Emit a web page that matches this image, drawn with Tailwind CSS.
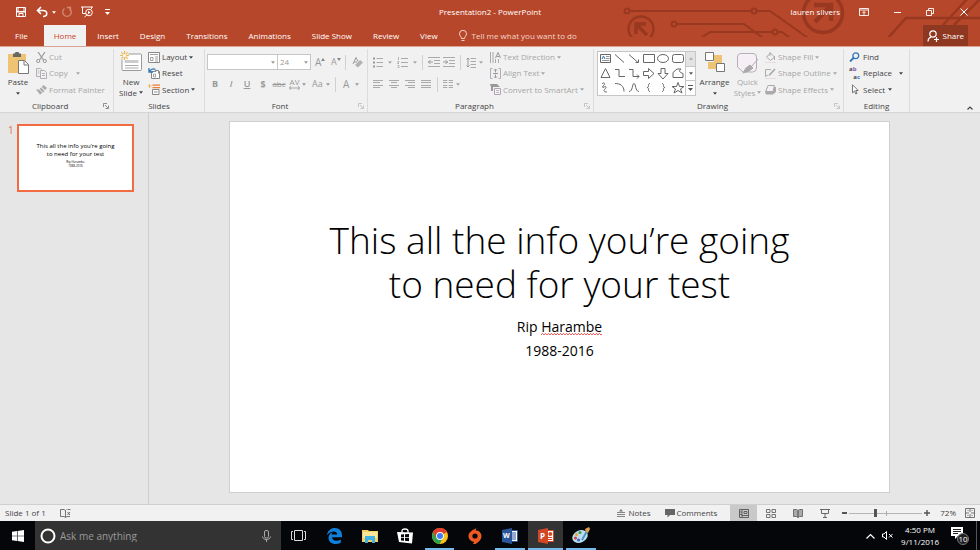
<!DOCTYPE html>
<html lang="en">
<head>
    <meta charset="UTF-8">
    <meta name="viewport" content="width=device-width, initial-scale=1.0">
    <title>Presentation2 - PowerPoint</title>
    <script src="https://cdn.jsdelivr.net/npm/@tailwindcss/browser@4"></script>
</head>
<body class="flex flex-col h-screen overflow-hidden bg-[#e6e6e6] font-['Open_Sans','Noto_Sans',sans-serif] text-[8px] leading-[12px] text-[#444]">

    <!-- Shared icons -->
    <svg class="hidden">
        <symbol id="caret" viewBox="0 0 5 3"><path d="M0 0h5L2.500 3z" fill="currentColor"/></symbol>
        <symbol id="launcher" viewBox="0 0 6 6"><path d="M.5 4V.5H4M2 2l3 3M5.500 2.500v3h-3" fill="none" stroke="currentColor" stroke-width=".8"/></symbol>
    </svg>

    <!-- Title bar and tabs -->
    <header class="relative shrink-0 bg-[#b7472a] text-white border-b border-[#dba394]">
        <svg class="absolute top-0 right-0 w-[360px] h-[37px]" viewBox="620 0 360 37" fill="none" stroke="#993820" stroke-width="2">
            <circle cx="627" cy="11" r="2.500"/><path d="M630 11h121M757 11h13l38 27"/><circle cx="754" cy="11" r="2.500"/>
            <circle cx="674" cy="24" r="2.500"/><path d="M677 24h67l19 14M701 38l9-6h62M778 32h4l8 6"/><circle cx="775" cy="32" r="2.500"/>
            <circle cx="641" cy="29" r="12.500" stroke-width="2.500"/><path d="M636 34v-10h10M637 25l10 10" stroke-width="3.500"/>
            <circle cx="823" cy="13" r="19.500" stroke-width="3.500"/><path d="M814 5h17v16M830 6l-15 16" stroke-width="4.500"/>
            <path d="M888 38l18-20h74" stroke-width="2.500"/><path d="M943 25l25-27M954 25l27-27" stroke-width="2.500"/>
        </svg>

        <div class="relative grid grid-cols-[1fr_auto_1fr] items-center h-[24px]">
            <div class="flex items-center pl-[15px]">
                <button aria-label="Save" class="w-[21px]"><svg class="w-3 h-3" viewBox="0 0 12 12" fill="none" stroke="#fff"><path d="M1.500 1.500h9v9h-9z"/><path d="M3 1.500v4h6v-4M4 10.500v-3h4v3" /><path d="M2 5h8v1.500H2z" fill="#fff" stroke="none"/></svg></button>
                <button aria-label="Undo" class="flex items-center gap-1 w-[25px]"><svg class="w-3 h-3" viewBox="0 0 12 12" fill="none" stroke="#fff" stroke-width="1.600"><path d="M5 1L1.500 4.500 5 8M2 4.500h5c5 0 5 6 0 6"/></svg><svg class="w-1 h-[3px]"><use href="#caret"/></svg></button>
                <button aria-label="Repeat" class="w-[20px]"><svg class="w-3 h-3" viewBox="0 0 12 12" fill="none" stroke="#d18a77" stroke-width="1.300"><path d="M3.500 2.500a4.300 4.300 0 1 0 5 0M6 1.500h3.500V5"/></svg></button>
                <button aria-label="Start From Beginning" class="w-[24px]"><svg class="w-3 h-3" viewBox="0 0 12 12" fill="none" stroke="#fff"><path d="M0 1h12M1.500 1v6.500H5M10.500 1v2M3.500 11l3-2.500"/><circle cx="8" cy="6.500" r="3.300"/><path d="M7 4.800v3.400l2.600-1.700z" fill="#fff" stroke="none"/></svg></button>
                <button aria-label="Customize Quick Access Toolbar"><svg class="w-[5px] h-[6px]" viewBox="0 0 5 6" fill="#fff"><path d="M0 0h5v1H0zM0 3h5L2.500 6z"/></svg></button>
            </div>
            <h1>Presentation2 - PowerPoint</h1>
            <div class="flex items-center justify-end">
                <span class="pr-[15px]">lauren silvers</span>
                <button aria-label="Ribbon Display Options" class="flex justify-center w-[18px]"><svg class="w-[10px] h-[8px]" viewBox="0 0 10 8" fill="none" stroke="#fff"><path d="M.5.5h9v7h-9zM0 2h10M5 7V3.500M3.500 5L5 3.500 6.500 5" stroke-width=".9"/></svg></button>
                <button aria-label="Minimize" class="flex justify-center w-[48px]"><svg class="w-[7px] h-[7px]" viewBox="0 0 7 7"><path d="M0 3.500h7" stroke="#fff"/></svg></button>
                <button aria-label="Restore Down" class="flex justify-center w-[18px]"><svg class="w-2 h-2" viewBox="0 0 8 8" fill="none" stroke="#fff" stroke-width=".9"><path d="M.5 2.500h5v5h-5zM2.500 2V.5h5v5H6"/></svg></button>
                <button aria-label="Close" class="flex justify-center w-[41px] pl-2"><svg class="w-2 h-2" viewBox="0 0 8 8"><path d="M.5.5l7 7M7.500.5l-7 7" stroke="#fff"/></svg></button>
            </div>
        </div>

        <nav class="relative flex gap-px h-[22px] pt-px">
            <button class="px-[15px]">File</button>
            <button class="px-2.5 bg-[#f1f1f1] text-[#c8472a]">Home</button>
            <button class="px-2.5">Insert</button>
            <button class="px-2.5">Design</button>
            <button class="px-2.5">Transitions</button>
            <button class="px-2.5">Animations</button>
            <button class="px-2.5">Slide Show</button>
            <button class="px-2.5">Review</button>
            <button class="px-2.5">View</button>
            <button class="flex items-center gap-[5px] px-2.5 text-[#f3d5cd]"><svg class="w-2 h-3" viewBox="0 0 8 12" fill="none" stroke="currentColor"><path d="M2.500 8.500c0-2-2-2.500-2-4.700a3.500 3.500 0 0 1 7 0c0 2.200-2 2.700-2 4.700zM2.500 10.500h3"/></svg>Tell me what you want to do</button>
            <button class="flex items-center gap-1 px-1 ml-auto mr-3 bg-[#8f3821]"><svg class="w-3 h-3" viewBox="0 0 12 12" fill="none" stroke="#fff" stroke-width="1.200"><circle cx="6" cy="4" r="3.200"/><path d="M4 7c-2 .8-3 2-3 4.500M9.500 7v5M7 9.500h5"/></svg>Share</button>
        </nav>
    </header>

    <!-- Ribbon -->
    <div class="flex shrink-0 h-[66px] bg-[#f1f1f1] border-b border-[#d5d5d5] pt-[2px]">

        <!-- Clipboard -->
        <section class="flex flex-col w-[114px] border-r border-[#dcdcdc]">
            <div class="flex flex-1">
                <button class="flex flex-col items-center w-[36px] pt-[3px]">
                    <svg class="w-[21px] h-[22px]" viewBox="0 0 21 22"><path d="M0 2h18v19H0z" fill="#eec473"/><path d="M5 1.500h2a2 2 0 0 1 4 0h2V5H5z" fill="#666"/><path d="M10.500 8.500h6l4 4v9h-10z" fill="#fff" stroke="#777"/><path d="M16 9v4h4" fill="none" stroke="#777"/></svg>
                    <span class="pt-0.5">Paste</span>
                    <svg class="w-1 h-[3px] mt-1"><use href="#caret"/></svg>
                </button>
                <div class="flex flex-col text-[#a6a6a6]">
                    <button class="flex items-center gap-[2px] h-[16px]"><svg class="w-[11px] h-[11px]" viewBox="0 0 11 11" fill="none" stroke="#999"><path d="M2 0l5.500 8M9 0L3.500 8" stroke-width="1.200"/><circle cx="2.200" cy="9" r="1.600"/><circle cx="8.800" cy="9" r="1.600"/></svg>Cut</button>
                    <button class="flex items-center gap-[2px] h-[16px]"><svg class="w-[11px] h-[11px]" viewBox="0 0 11 11" fill="#f4eef4" stroke="#aaa" stroke-width=".9"><path d="M.5.500h4l2 2v6h-6z"/><path d="M4.500 2.500h4l2 2v6h-6z"/><path d="M6 5.500h3M6 7.500h3M1.800 3h1.500M1.800 5h1.500"/></svg>Copy<svg class="w-1 h-[3px] ml-1.5"><use href="#caret"/></svg></button>
                    <button class="flex items-center gap-[2px] h-[17px]"><svg class="w-[11px] h-[10px]" viewBox="0 0 11 10" fill="#aaa"><path d="M7.500 0L11 3 9 5 5.800 2zM5 2.500L8.500 6 7 7.500 3.500 4zM3 4.500L6.500 8 4 9.500 0 4.500z"/></svg>Format Painter</button>
                </div>
            </div>
            <div class="flex items-center h-[12px] pl-8 pr-1"><span>Clipboard</span><button aria-label="Clipboard options" class="ml-auto text-[#777]"><svg class="block w-[6px] h-[6px]"><use href="#launcher"/></svg></button></div>
        </section>

        <!-- Slides -->
        <section class="flex flex-col w-[91px] border-r border-[#dcdcdc]">
            <div class="flex flex-1">
                <button class="flex flex-col items-center w-[34px] pt-[2px]">
                    <svg class="w-[22px] h-[21px] shrink-0" viewBox="0 0 22 21"><rect x="2" y="3" width="19.500" height="16.500" rx="1" fill="#fff" stroke="#999"/><path d="M4.500 9h14v3h-14z" fill="#ccc"/><path d="M5 14.500h13.500M5 17h13.500" stroke="#aaa"/><path d="M0 0h8.500v8.500H0z" fill="#f1f1f1"/><path d="M4.500 0v9M0 4.500h9M1.300 1.300l6.400 6.400M7.700 1.300L1.300 7.700" stroke="#f0b955" stroke-width="1.200"/><circle cx="4.500" cy="4.500" r="1.500" fill="#fff"/></svg>
                    <span class="pt-1 leading-[11px]">New<br><span class="flex items-center gap-[2px]">Slide <svg class="w-1 h-[3px]"><use href="#caret"/></svg></span></span>
                </button>
                <div class="flex flex-col">
                    <button class="flex items-center gap-[2px] h-[16px]"><svg class="w-[12px] h-[11px]" viewBox="0 0 12 11" fill="#fff" stroke="#888"><path d="M.5.500h11v10H.5z"/><path d="M2 2.500h8M2.500 5.500h2.500v3H2.500zM7 5h3M7 7h3M7 9h3" stroke-width=".8"/></svg>Layout<svg class="w-1 h-[3px]"><use href="#caret"/></svg></button>
                    <button class="flex items-center gap-[2px] h-[16px]"><svg class="w-[12px] h-[11px]" viewBox="0 0 12 11" fill="#fff" stroke="#888"><path d="M3.500 3.500h8v7h-8z"/><path d="M7 2.500h3.500v3" stroke="#888"/><path d="M5.500 6h2v3h-2z" stroke-width=".7"/><path d="M1 0v4h4M1.500 3.500c2-3 4-3 6-2" fill="none" stroke="#2f74b5" stroke-width="1.300"/></svg>Reset</button>
                    <button class="flex items-center gap-[2px] h-[17px]"><svg class="w-[12px] h-[11px]" viewBox="0 0 12 11" fill="none"><path d="M4.500 1.200H12M4.500 3.700H12" stroke="#ed7d31" stroke-width="1.300"/><path d="M1.500 0v4M0 2h3.500" stroke="#f0b955"/><path d="M4.500 5.500h6.500v5H4.500z" fill="#fff" stroke="#888"/><path d="M6 8h3.500" stroke="#888"/></svg>Section<svg class="w-1 h-[3px]"><use href="#caret"/></svg></button>
                </div>
            </div>
            <div class="h-[12px] text-center">Slides</div>
        </section>

        <!-- Font -->
        <section class="flex flex-col w-[163px] border-r border-[#dcdcdc] text-[#999]">
            <div class="flex flex-col flex-1 gap-[6px] pt-[5px] pl-[2px]">
                <div class="flex items-center h-[16px]">
                    <label class="relative block w-[71px] h-[16px]">
                        <select aria-label="Font" class="block w-full h-full px-1 bg-white border border-[#c6c6c6] appearance-none"><option></option></select>
                        <svg class="absolute right-[3px] top-[7px] w-1 h-[3px]"><use href="#caret"/></svg>
                    </label>
                    <label class="relative block w-[34px] h-[16px] -ml-px">
                        <select aria-label="Font Size" class="block w-full h-full px-0.5 bg-white border border-[#c6c6c6] appearance-none"><option>24</option></select>
                        <svg class="absolute right-[3px] top-[7px] w-1 h-[3px]"><use href="#caret"/></svg>
                    </label>
                    <button aria-label="Increase Font Size" class="flex w-[16px] ml-1 text-[10px]">A<svg class="w-[4px] h-[3px] mt-0.5" viewBox="0 0 4 3"><path d="M0 3l2-3 2 3z" fill="#888"/></svg></button>
                    <button aria-label="Decrease Font Size" class="flex w-[14px] text-[9px]">A<svg class="w-[4px] h-[3px] mt-0.5" viewBox="0 0 4 3"><path d="M0 0h4L2 3z" fill="#888"/></svg></button>
                    <span class="w-px h-[15px] bg-[#d0d0d0]"></span>
                    <button aria-label="Clear All Formatting" class="ml-1.5"><svg class="w-[11px] h-[11px]" viewBox="0 0 11 11"><path d="M1 7L4 .5l2 4M2 5h3" fill="none" stroke="#999"/><path d="M8 3l3 2.500-5 5L3 8z" fill="#b5b0b5"/></svg></button>
                </div>
                <div class="flex items-center h-[16px] text-[9px]">
                    <button class="w-[16px] font-bold">B</button>
                    <button class="w-[16px] italic font-semibold">I</button>
                    <button class="w-[16px] font-semibold underline">U</button>
                    <button class="w-[16px] font-bold text-shadow-xs">S</button>
                    <button class="w-[16px] text-[8px] line-through">abc</button>
                    <button aria-label="Character Spacing" class="flex items-center gap-[2px] w-[21px] pl-0.5"><span class="flex flex-col text-[8px] leading-[8px]">AV<svg class="w-[11px] h-[4px]" viewBox="0 0 11 4" fill="none" stroke="#999" stroke-width=".8"><path d="M0 2h11M2 0L.5 2 2 4M9 0l1.500 2L9 4"/></svg></span><svg class="w-1 h-[3px]"><use href="#caret"/></svg></button>
                    <button class="flex items-center gap-[3px] pl-1 w-[25px]">Aa<svg class="w-1 h-[3px]"><use href="#caret"/></svg></button>
                    <span class="w-px h-[15px] ml-0.5 bg-[#d0d0d0]"></span>
                    <button aria-label="Font Color" class="flex items-center gap-1.5 pl-[7px] text-[10px]">A<svg class="w-1 h-[3px]"><use href="#caret"/></svg></button>
                </div>
            </div>
            <div class="relative h-[12px] text-center text-[#444] pr-3">Font<button aria-label="Font options" class="absolute right-[3px] top-[3px] text-[#bbb]"><svg class="block w-[6px] h-[6px]"><use href="#launcher"/></svg></button></div>
        </section>

        <!-- Paragraph -->
        <section class="flex flex-col w-[226px] border-r border-[#dcdcdc] text-[#a6a6a6]">
            <div class="flex flex-1">
                <div class="flex flex-col gap-[6px] pt-[5px] pl-[5px] w-[122px]">
                    <div class="flex items-center h-[16px]">
                        <button aria-label="Bullets" class="flex items-center gap-[5px] w-[24px]"><svg class="w-[10px] h-[11px]" viewBox="0 0 10 11" stroke="#aaa"><path d="M3.500 1.500H10M3.500 5.500H10M3.500 9.500H10"/><path d="M0 1.500h2M0 5.500h2M0 9.500h2" stroke-width="2" stroke="#999"/></svg><svg class="w-1 h-[3px]"><use href="#caret"/></svg></button>
                        <button aria-label="Numbering" class="flex items-center gap-[5px] w-[25px]"><svg class="w-[11px] h-[11px]" viewBox="0 0 11 11" fill="none" stroke="#aaa"><path d="M4 1.500h7M4 5.500h7M4 9.500h7"/><path d="M1.500 0v3M.5 4.500h1.500L.5 6.500H2M.5 8.500H2v2H.5" stroke="#999" stroke-width=".7"/></svg><svg class="w-1 h-[3px]"><use href="#caret"/></svg></button>
                        <span class="w-px h-[15px] bg-[#d0d0d0]"></span>
                        <button aria-label="Decrease List Level" class="pl-[5px] w-[19px]"><svg class="w-[12px] h-[10px]" viewBox="0 0 12 10" fill="none" stroke="#999"><path d="M0 .5h12M6 3.500h6M6 6.500h6M0 9.500h12" stroke="#aaa"/><path d="M0 5h5M2.500 3L.5 5l2 2"/></svg></button>
                        <button aria-label="Increase List Level" class="w-[18px] pl-px"><svg class="w-[12px] h-[10px]" viewBox="0 0 12 10" fill="none" stroke="#999"><path d="M0 .5h12M6 3.500h6M6 6.500h6M0 9.500h12" stroke="#aaa"/><path d="M0 5h5M2.500 3l2 2-2 2"/></svg></button>
                        <span class="w-px h-[15px] bg-[#d0d0d0]"></span>
                        <button aria-label="Line Spacing" class="flex items-center gap-[3px] pl-[5px]"><svg class="w-[10px] h-[11px]" viewBox="0 0 10 11" fill="none" stroke="#aaa"><path d="M4.500 1.500H10M4.500 4.500H10M4.500 7.500H10M4.500 10.500H10"/><path d="M2 1v9M.5 2.500L2 1l1.500 1.500M.5 8.500L2 10l1.500-1.500" stroke="#999"/></svg><svg class="w-1 h-[3px]"><use href="#caret"/></svg></button>
                    </div>
                    <div class="flex items-center h-[16px]">
                        <button aria-label="Align Left" class="w-[16px]"><svg class="w-[11px] h-[8px]" viewBox="0 0 11 8" stroke="#aaa"><path d="M0 .5h10M0 2.500h7M0 5.500h10M0 7.500h7"/></svg></button>
                        <button aria-label="Center" class="w-[16px]"><svg class="w-[11px] h-[8px]" viewBox="0 0 11 8" stroke="#aaa"><path d="M0 .5h10M2 2.500h6M0 5.500h10M2 7.500h6"/></svg></button>
                        <button aria-label="Align Right" class="w-[16px]"><svg class="w-[11px] h-[8px]" viewBox="0 0 11 8" stroke="#aaa"><path d="M0 .5h10M3 2.500h7M0 5.500h10M3 7.500h7"/></svg></button>
                        <button aria-label="Justify" class="w-[16px]"><svg class="w-[11px] h-[8px]" viewBox="0 0 11 8" stroke="#aaa"><path d="M0 .5h10M0 2.500h10M0 5.500h10M0 7.500h10"/></svg></button>
                        <span class="w-px h-[15px] bg-[#d0d0d0]"></span>
                        <button aria-label="Columns" class="flex items-center gap-[3px] pl-[5px]"><svg class="w-[10px] h-[8px]" viewBox="0 0 10 8" stroke="#aaa"><path d="M0 .5h4.300M0 2.500h4.300M0 5.500h4.300M0 7.500h4.300M5.700.5H10M5.700 2.500H10M5.700 5.500H10M5.700 7.500H10"/></svg><svg class="w-1 h-[3px]"><use href="#caret"/></svg></button>
                    </div>
                </div>
                <div class="flex flex-col">
                    <button class="flex items-center gap-[2px] h-[16px]"><svg class="w-[11px] h-[11px]" viewBox="0 0 11 11" fill="none" stroke="#999"><path d="M.5 0v11M3 0v11M5.500 7v4M8.500 7v4" stroke-width=".8"/><path d="M5.500 6L8 .5l2.500 5.500M6.500 4.500h3"/></svg>Text Direction<svg class="w-1 h-[3px]"><use href="#caret"/></svg></button>
                    <button class="flex items-center gap-[2px] h-[16px]"><svg class="w-[11px] h-[11px]" viewBox="0 0 11 11" fill="none" stroke="#999"><path d="M2.500.5h-2v10h2M8.500.5h2v10h-2" stroke="#b8a8bc"/><path d="M5.500 1v3.500M5.500 6.500V10M4 2.500L5.500 1 7 2.500M4 8.500L5.500 10 7 8.500M3 5.500h5"/></svg>Align Text<svg class="w-1 h-[3px]"><use href="#caret"/></svg></button>
                    <button class="flex items-center gap-[2px] h-[17px]"><svg class="w-[11px] h-[11px]" viewBox="0 0 11 11"><path d="M0 0h7l3 3H3v4H1V3z" fill="#999"/><path d="M4.500 4.500h6v6h-6z" fill="#f8f2f8" stroke="#b0a4b4"/><path d="M6 6.500h3M6 8.500h3" stroke="#aaa" stroke-width=".8"/></svg>Convert to SmartArt<svg class="w-1 h-[3px]"><use href="#caret"/></svg></button>
                </div>
            </div>
            <div class="relative h-[12px] text-center text-[#444] pr-3">Paragraph<button aria-label="Paragraph options" class="absolute right-[3px] top-[3px] text-[#bbb]"><svg class="block w-[6px] h-[6px]"><use href="#launcher"/></svg></button></div>
        </section>

        <!-- Drawing -->
        <section class="flex flex-col w-[250px] border-r border-[#dcdcdc]">
            <div class="flex flex-1">
                <div class="flex w-[99px] h-[45px] mt-[2px] ml-[3px] bg-white border border-[#c6c6c6]">
                    <svg role="img" aria-label="Shapes" class="w-[87px] h-[43px]" viewBox="0 0 87 43" fill="none" stroke="#666">
                        <path d="M2.500 2.500h10v8h-10z"/><path d="M4 7l1.500-3L7 7" stroke="#2f74b5"/><path d="M8 4.500h3.500M8 6.500h3.500M4 8.500h7.500" stroke-width=".7"/>
                        <path d="M17 2.500l9 8M31 2.500l9 8M37.500 10.500h3v-3M45.500 2.500h11v8h-11z"/><ellipse cx="65" cy="6.500" rx="5.500" ry="4"/><rect x="74.500" y="2.500" width="11" height="8" rx="2"/>
                        <path d="M7.500 16.500l4.500 9H3zM17 17.500h4v7h6M31 17.500h4v7h6M39 22.500l2 2-2 2M45.500 19.500h5v-3l5.500 5-5.500 5v-3h-5zM63 16.500h4v5h3l-5 5.500-5-5.500h3zM75 25.500v-5l4-3.500h4c-3 2-1 3.500 2 4.500v4z"/>
                        <path d="M4 32c1-2 4-1 2 1s-2 3 0 2 3 0 1 2-1 3 2 3M17 31.500c5 0 9 2 9 8M31 39.500c4 0 3-8 5-8s1 8 5 8M52 31.500c-3 0 0 4-3 4 3 0 0 4 3 4M64 31.500c3 0 0 4 3 4-3 0 0 4-3 4M80 30.500l1.500 4H86l-3.500 2.500 1.500 4-4-2.500-4 2.500 1.500-4L74 34.500h4.500z"/>
                    </svg>
                    <div class="flex flex-col flex-1 border-l border-[#c6c6c6] text-[#555]">
                        <button aria-label="Row up" class="flex items-center justify-center flex-1 bg-[#e3e3e3] text-[#aaa]"><svg class="w-1 h-[3px] rotate-180"><use href="#caret"/></svg></button>
                        <button aria-label="Row down" class="flex items-center justify-center flex-1 border-y border-[#c6c6c6]"><svg class="w-1 h-[3px]"><use href="#caret"/></svg></button>
                        <button aria-label="More shapes" class="flex items-center justify-center flex-1"><svg class="w-[5px] h-[6px]" viewBox="0 0 5 6" fill="currentColor"><path d="M0 0h5v1H0zM0 3h5L2.500 6z"/></svg></button>
                    </div>
                </div>
                <button class="flex flex-col items-center w-[37px] pt-[3px]">
                    <svg class="w-[20px] h-[20px]" viewBox="0 0 20 20"><path d="M9 3h8v8H9zM3 10h8v7H3z" fill="#eec473"/><path d="M.5.500h8v8h-8zM11.500 11.500h8v8h-8z" fill="#fff" stroke="#777"/></svg>
                    <span class="pt-1">Arrange</span>
                    <svg class="w-1 h-[3px] mt-1"><use href="#caret"/></svg>
                </button>
                <button class="flex flex-col items-center w-[29px] pt-[4px] text-[#a6a6a6]">
                    <svg class="w-[22px] h-[21px] shrink-0" viewBox="0 0 22 21"><path d="M4 .5h12q3.500 0 3.500 3.500v11q0 4-4 4H6L.5 14V4Q.5.500 4 .5z" fill="#f6f0f6" stroke="#b4b0b4"/><path d="M21 6l-7 8M13 12l3 3-4 3-6 2 3-5z" fill="#aaa" stroke="#aaa"/></svg>
                    <span class="pt-0.5 leading-[11px]">Quick<br><span class="flex items-center gap-[2px]">Styles<svg class="w-1 h-[3px]"><use href="#caret"/></svg></span></span>
                </button>
                <div class="flex flex-col pl-[3px] text-[#a6a6a6]">
                    <button class="flex items-center gap-[2px] h-[16px]"><svg class="w-[11px] h-[11px]" viewBox="0 0 11 11" fill="none" stroke="#aaa"><path d="M1.500 5l4-4 4 4-4 3.500zM5 0v4M9.500 4v4"/><path d="M0 10.500h11" stroke="#e2dce2"/></svg>Shape Fill<svg class="w-1 h-[3px]"><use href="#caret"/></svg></button>
                    <button class="flex items-center gap-[2px] h-[16px]"><svg class="w-[11px] h-[11px]" viewBox="0 0 11 11" fill="none" stroke="#aaa"><path d="M6 1.500H.5v7L3 7"/><path d="M10 1L4 7.500" stroke-width="1.800"/><path d="M0 10.500h11" stroke="#e2dce2"/></svg>Shape Outline<svg class="w-1 h-[3px]"><use href="#caret"/></svg></button>
                    <button class="flex items-center gap-[2px] h-[17px]"><svg class="w-[11px] h-[10px]" viewBox="0 0 11 10"><path d="M3 2h8v5L8 9.500H1L0 7z" fill="#aaa"/><path d="M3 .5h6.500l-1.500 6H.8z" fill="#f6f0f6" stroke="#aaa"/></svg>Shape Effects<svg class="w-1 h-[3px]"><use href="#caret"/></svg></button>
                </div>
            </div>
            <div class="relative h-[12px] text-center pr-3">Drawing<button aria-label="Drawing options" class="absolute right-[3px] top-[3px] text-[#bbb]"><svg class="block w-[6px] h-[6px]"><use href="#launcher"/></svg></button></div>
        </section>

        <!-- Editing -->
        <section class="flex flex-col w-[66px] border-r border-[#dcdcdc]">
            <div class="flex flex-col flex-1 pl-[5px]">
                <button class="flex items-center gap-[3px] h-[16px]"><svg class="w-[11px] h-[10px]" viewBox="0 0 11 10" fill="none" stroke="#2f74b5" stroke-width="1.300"><circle cx="6.800" cy="3.700" r="2.900"/><path d="M4.500 6L1 9.500" stroke-width="1.800"/></svg>Find</button>
                <button class="flex items-center gap-[3px] h-[16px]"><span class="flex flex-col w-[11px] text-[6px] leading-[8px] font-bold"><span class="self-start">a<span class="text-[#8e4fb0]">b</span></span><span class="self-end">a<span class="text-[#2f74b5]">c</span></span></span>Replace<svg class="w-1 h-[3px] ml-1"><use href="#caret"/></svg></button>
                <button class="flex items-center gap-[3px] h-[17px]"><svg class="w-[11px] h-[11px]" viewBox="0 0 11 11"><path d="M3.500.8v8l2-1.800 1.300 3 1.200-.6L6.700 6.500h2.500z" fill="#fff" stroke="#666" stroke-width=".9"/></svg>Select<svg class="w-1 h-[3px]"><use href="#caret"/></svg></button>
            </div>
            <div class="h-[12px] text-center">Editing</div>
        </section>

        <button aria-label="Collapse the Ribbon" class="self-end ml-auto mr-[7px] mb-0.5"><svg class="w-[6px] h-[4px]" viewBox="0 0 6 4"><path d="M.5 3.500L3 1l2.500 2.500" fill="none" stroke="#444" stroke-width="1.200"/></svg></button>
    </div>

    <!-- Workspace -->
    <main class="flex flex-1 min-h-0">
        <aside class="flex items-start w-[149px] shrink-0 pt-[11px] pl-[8px] border-r border-[#cfcfcf]">
            <span class="w-[9px] text-[10px] text-[#e8704f]">1</span>
            <button class="w-[117px] h-[68px] pt-[16px] flex flex-col items-center bg-white border-2 border-[#f26b43] text-black">
                <span class="text-[6px] leading-[8px]">This all the info you’re going<br>to need for your test</span>
                <span class="pt-[2px] text-[3px] leading-[4px]">Rip Harambe<br>1988-2016</span>
            </button>
        </aside>
        <section class="flex-1 pt-[8px] pl-20 pr-[90px]">
            <div class="flex flex-col items-center w-full aspect-video bg-white border border-[#cfcfcf] text-black text-center">
                <h2 class="pt-[96px] text-[37px] leading-[44px] font-light">This all the info you’re going<br>to need for your test</h2>
                <p class="pt-[9px] text-[14px] leading-[24px]">Rip <span class="relative inline-block">Harambe<svg class="absolute left-0 bottom-[4px] w-full h-[2px]"><defs><pattern id="squiggle" width="3" height="2" patternUnits="userSpaceOnUse"><path d="M0 2L1.500 .3 3 2" fill="none" stroke="#f03030" stroke-width=".8"/></pattern></defs><rect width="100%" height="2" fill="url(#squiggle)"/></svg></span><br>1988-2016</p>
            </div>
        </section>
    </main>

    <!-- Status bar -->
    <footer class="flex items-center shrink-0 h-[17px] bg-[#f1f1f1] border-t border-[#cfcfcf] pl-[5px]">
        <span>Slide 1 of 1</span>
        <button aria-label="Spelling" class="ml-[14px]"><svg class="w-[11px] h-[9px]" viewBox="0 0 11 9" fill="none" stroke="#666" stroke-width=".9"><path d="M5.500 8.500L4 7.500H.5v-7H4l1.500 1 1-1M5.500 1.500v7l1.500-1h3M7.500 3l2.500 3M10 3L7.500 6M7.500.5h3"/></svg></button>
        <button class="flex items-center gap-1 ml-auto"><svg class="w-2 h-[8px]" viewBox="0 0 8 8" stroke="#777"><path d="M0 3.500h8M0 5.500h8M0 7.500h8" stroke-width=".9"/><path d="M2 2.500L4 0l2 2.500z" fill="#777" stroke="none"/></svg>Notes</button>
        <button class="flex items-center gap-[2px] ml-[14px]"><svg class="w-[10px] h-[9px]" viewBox="0 0 10 9"><path d="M0 0h10v6H5L2.500 8.500V6H0z" fill="#666"/></svg>Comments</button>
        <button aria-label="Normal" class="flex items-center justify-center self-stretch w-[27px] ml-[13px] bg-[#c9c9c9]"><svg class="w-[10px] h-[9px]" viewBox="0 0 10 9" fill="none" stroke="#555" stroke-width=".9"><path d="M.5.500h9v8h-9zM3 .5v8M3 6.500h6.500M5 2.500h3v2H5zM.5 3H3M.5 5.500H3"/></svg></button>
        <button aria-label="Slide Sorter" class="flex justify-center w-[27px]"><svg class="w-[10px] h-[9px]" viewBox="0 0 10 9" fill="none" stroke="#666" stroke-width=".9"><path d="M.5.500h3.500v3H.5zM6 .5h3.500v3H6zM.5 5.500h3.500v3H.5zM6 5.500h3.500v3H6z"/></svg></button>
        <button aria-label="Reading View" class="flex justify-center w-[27px]"><svg class="w-[10px] h-[9px]" viewBox="0 0 10 9" fill="#aaa" stroke="#666" stroke-width=".9"><path d="M.5.500h3L5 1.500v7l-1.500-1h-3zM9.500.5h-3L5 1.500v7l1.500-1h3z"/></svg></button>
        <button aria-label="Slide Show" class="flex justify-center w-[27px]"><svg class="w-[10px] h-[9px]" viewBox="0 0 10 9" fill="none" stroke="#666"><path d="M0 .5h10M1.500.5v4h7v-4M5 4.500v4M3 8.500h4"/></svg></button>
        <button aria-label="Zoom Out" class="ml-1 w-[5px] h-[2px] bg-[#555]"></button>
        <div class="relative flex items-center w-[73px] h-[10px] mx-0.5">
            <input type="range" aria-label="Zoom" min="0" max="100" value="36" class="w-full h-px bg-[#b5b5b5] appearance-none [&::-webkit-slider-thumb]:appearance-none [&::-webkit-slider-thumb]:w-[3px] [&::-webkit-slider-thumb]:h-[8px] [&::-webkit-slider-thumb]:bg-[#555]">
            <span class="absolute left-1/2 top-[3px] w-px h-[5px] bg-[#aaa]"></span>
        </div>
        <button aria-label="Zoom In"><svg class="w-[6px] h-[6px]" viewBox="0 0 6 6"><path d="M0 3h6M3 0v6" stroke="#555" stroke-width="1.400"/></svg></button>
        <span class="ml-[10px]">72%</span>
        <button aria-label="Fit slide to current window" class="mr-[5px] ml-[9px]"><svg class="w-[10px] h-[10px]" viewBox="0 0 10 10" fill="none" stroke="#666" stroke-width=".9"><path d="M.5.500h9v9h-9zM5 0v4M5 6v4M0 5h4M6 5h4M2.500 2.500h1M6.500 2.500h1M2.500 7.500h1M6.500 7.500h1"/></svg></button>
    </footer>

    <!-- Windows taskbar -->
    <div class="flex items-stretch shrink-0 h-[29px] bg-[#04060a] text-white">
        <button aria-label="Start" class="flex items-center justify-center w-[35px]"><svg class="w-[12px] h-[12px]" viewBox="0 0 12 12" fill="#fff"><path d="M0 1.700L5 1v4.700H0zM5.600.9L12 0v5.700H5.600zM0 6.300h5V11l-5-.7zM5.600 6.300H12V12l-6.400-.9z"/></svg></button>
        <label class="flex items-center w-[246px] pl-[5px] pr-[10px] bg-[#333]">
            <svg class="w-[16px] h-[16px]" viewBox="0 0 16 16"><circle cx="8" cy="8" r="6.500" fill="none" stroke="#fff" stroke-width="2"/></svg>
            <input type="text" aria-label="Search" placeholder="Ask me anything" class="flex-1 min-w-0 pl-1 text-[10px] bg-transparent placeholder-[#9a9a9a]">
            <svg class="w-[9px] h-[12px]" viewBox="0 0 9 12" fill="none" stroke="#aaa"><rect x="2.500" y=".5" width="4" height="7.500" rx="1.500"/><path d="M.5 6.500c0 4 8 4 8 0M4.500 9.500V12"/></svg>
        </label>
        <button aria-label="Task View" class="flex items-center justify-center w-[35px]"><svg class="w-[15px] h-[11px]" viewBox="0 0 15 11" fill="none" stroke="#ddd"><path d="M3.500.5h8v10h-8zM2 1.500H.5v8H2M13 1.500h1.500v8H13"/></svg></button>
        <button aria-label="Microsoft Edge" class="flex items-center justify-center w-[36px]"><svg class="w-[15px] h-[16px]" viewBox="0 0 15 16"><path d="M0 7C.7 2.700 3.700 0 7.800 0 12.500 0 15 3.300 15 7.500v1.700H5c.2 4 5.500 4.300 8.800 2.300v3.300C8 17.500 1.500 15.500 1.500 10c0-2.800 1.500-4.800 4-5.800-.6.800-.8 1.500-.9 2.400h5.600C10.200 2.500 4 2.500 0 7z" fill="#1080dc"/></svg></button>
        <button aria-label="File Explorer" class="flex items-center justify-center w-[35px]"><svg class="w-[16px] h-[14px]" viewBox="0 0 16 14"><path d="M0 1h6l1 1h9v11H0z" fill="#f5cf62"/><path d="M1 3h14v6H1z" fill="#fbe59b"/><path d="M3 7h10v7h-3v-3H6v3H3z" fill="#3fb1e6"/></svg></button>
        <button aria-label="Store" class="flex items-center justify-center w-[35px]"><svg class="w-[16px] h-[16px]" viewBox="0 0 16 16"><path d="M5 5V3q0-2 3-2t3 2v2" fill="none" stroke="#fff" stroke-width="1.300"/><path d="M0 4l16 .5-1 11L2 14z" fill="#fff"/><path d="M4 6.500l3-.2v2.900H4zM8 6.200l4-.3v3.300H8zM4 10h3v2.700l-3-.3zM8 10h4v3.300l-4-.5z" fill="#04060a"/></svg></button>
        <button aria-label="Google Chrome" class="flex items-center justify-center w-[35px] relative"><svg class="w-[16px] h-[16px]" viewBox="0 0 16 16"><circle cx="8" cy="8" r="8" fill="#fbc116"/><path d="M8 8L1.100 4A8 8 0 0 1 15 4z" fill="#e33b2e"/><path d="M8 8h-2L1.100 4A8 8 0 0 0 7.500 16l3.500-6z" fill="#31a350"/><path d="M8 4h7a8 8 0 0 0-13.900 0l3.500 6z" fill="#e33b2e"/><circle cx="8" cy="8" r="3.900" fill="#fff"/><circle cx="8" cy="8" r="3" fill="#3d7ef0"/></svg><span class="absolute bottom-0 inset-x-[3px] h-[2px] bg-[#76b9ed]"></span></button>
        <button aria-label="Origin" class="flex items-center justify-center w-[35px]"><svg class="w-[14px] h-[16px]" viewBox="0 0 14 16"><path d="M8.500 0L7.500 2.200C11 2.200 13.500 5 13.500 8c0 4.500-4 6.500-6 8H5l1.200-2.200C3 13.800.5 11 .5 8c0-4 4.500-6 8-8z" fill="#f05a22"/><circle cx="7" cy="8" r="2.600" fill="#04060a"/></svg></button>
        <button aria-label="Word" class="relative flex items-center justify-center w-[36px]"><svg class="w-[16px] h-[16px]" viewBox="0 0 16 16"><path d="M8.500 2.500h7v11h-7z" fill="#fff" stroke="#2b579a"/><path d="M10 5h4M10 7h4M10 9h4M10 11h4" stroke="#2b579a"/><path d="M0 2l10-2v16L0 14z" fill="#2b579a"/></svg><span class="absolute left-[11px] top-[9px] text-[7px] leading-[11px] font-bold">W</span><span class="absolute bottom-0 inset-x-[3px] h-[2px] bg-[#76b9ed]"></span></button>
        <button aria-label="PowerPoint" class="relative flex items-center justify-center w-[35px] bg-[#333]"><svg class="w-[16px] h-[16px]" viewBox="0 0 16 16"><path d="M8.500 2.500h7v11h-7z" fill="#fff" stroke="#d24726"/><path d="M10 9.500h4M10 11.500h4" stroke="#d24726"/><circle cx="12.300" cy="6" r="2" fill="#d24726"/><path d="M0 2l10-2v16L0 14z" fill="#d24726"/></svg><span class="absolute left-[12px] top-[9px] text-[8px] leading-[11px] font-bold">P</span><span class="absolute bottom-0 inset-x-0 h-[2px] bg-[#76b9ed]"></span></button>
        <button aria-label="Paint" class="relative flex items-center justify-center w-[36px]"><svg class="w-[18px] h-[17px]" viewBox="0 0 18 17"><ellipse cx="8" cy="9.500" rx="8" ry="6" transform="rotate(-25 8 9.500)" fill="#b9dcee"/><circle cx="3.500" cy="11" r="1.500" fill="#d8402e"/><circle cx="4.500" cy="7.500" r="1.500" fill="#f0a030"/><circle cx="8" cy="5.500" r="1.500" fill="#3a9a50"/><circle cx="6.500" cy="13" r="1.500" fill="#3a64c8"/><path d="M15 4l-5 9" stroke="#4b8fc0" stroke-width="1.800"/><path d="M13 2l4-2 1 2-2 4-2-1z" fill="#e0a050"/></svg><span class="absolute bottom-0 inset-x-[3px] h-[2px] bg-[#76b9ed]"></span></button>

        <div class="flex items-center ml-auto">
            <button aria-label="Show hidden icons"><svg class="w-[9px] h-[6px]" viewBox="0 0 9 6"><path d="M.5 5.500l4-4 4 4" fill="none" stroke="#fff" stroke-width="1.200"/></svg></button>
            <button aria-label="Volume muted" class="ml-[7px]"><svg class="w-[11px] h-[9px]" viewBox="0 0 11 9" fill="none" stroke="#fff"><path d="M.5 3v3H2l2.500 2.500v-8L2 3zM7 3l3.500 3.500M10.500 3L7 6.500"/></svg></button>
            <div class="ml-2 text-center"><time>4:50 PM</time><br><time>9/11/2016</time></div>
            <button aria-label="Notifications" class="relative w-[18px] h-[18px] ml-[12px] mr-[7px]">
                <svg class="absolute left-0 top-0 w-[12px] h-[13px]" viewBox="0 0 12 13"><path d="M0 0h12v9H7l-3 3V9H0z" fill="#fff"/><path d="M2 2.500h8M2 4.500h8M2 6.500h5" stroke="#222"/></svg>
                <span class="absolute right-0 bottom-0 w-[12px] h-[12px] text-center text-[8px] leading-[10px] bg-[#222] border border-[#777] rounded-full">10</span>
            </button>
            <span class="w-px h-[29px] mr-[3px] bg-[#555]"></span>
        </div>
    </div>

</body>
</html>
